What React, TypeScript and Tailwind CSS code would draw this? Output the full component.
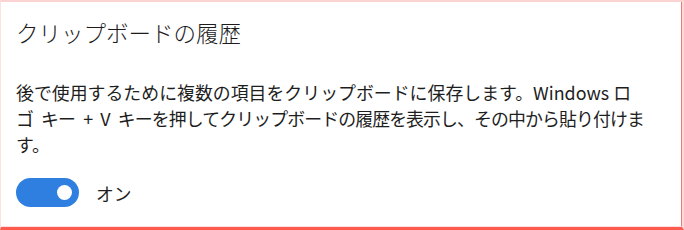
import React, { useState } from "react"

const FONT = { fontFamily: '"Noto Sans CJK JP", "Noto Sans", sans-serif' }

function Toggle({ on, onChange }: { on: boolean; onChange: () => void }) {
    return (
        <button
            onClick={onChange}
            className={`flex items-center w-[63px] h-[29px] rounded-full px-[7px] shrink-0
                ${on ? "bg-[#2e7fe0] justify-end" : "bg-white border-2 border-[#333] justify-start"}`}
        >
            <span className={`block w-[15px] h-[15px] rounded-full ${on ? "bg-white" : "bg-[#333]"}`} />
        </button>
    )
}

export default function App() {
    const [on, setOn] = useState(true)

    return (
        <div className="w-[684px] h-[230px] bg-white border-t-2 border-l border-r-2 border-b-[3px] border-t-[#fcd3d3] border-l-[#fde2e2] border-r-[#fcd8d8] border-b-[#ff5a50]" style={FONT}>
            <div className="h-full border-r border-b border-r-[#ef7a7a] border-b-[#fde0e0] pl-[15px] pt-[14px]">
                {/* Header */}
                <h1 className="text-[22.5px] leading-[32px] font-light text-[#1c1c1c]">
                    クリップボードの履歴
                </h1>

                {/* Description */}
                <p className="mt-[31px] text-[17.9px] leading-[26px] text-[#1e1e1e] whitespace-pre">
                    後で使用するために複数の項目をクリップボードに保存します。Windows ロ<br />
                    <span className="tracking-[-0.9px] [word-spacing:5px]">ゴ キー + V キーを押してクリップボードの履歴を表示し、その中から貼り付けま</span><br />
                    す。
                </p>

                {/* Switch */}
                <div className="mt-[21px] flex items-center gap-[17px]">
                    <Toggle on={on} onChange={() => setOn(!on)} />
                    <span className="text-[17.8px] leading-[26px] text-[#1e1e1e]">{on ? "オン" : "オフ"}</span>
                </div>
            </div>
        </div>
    )
}
